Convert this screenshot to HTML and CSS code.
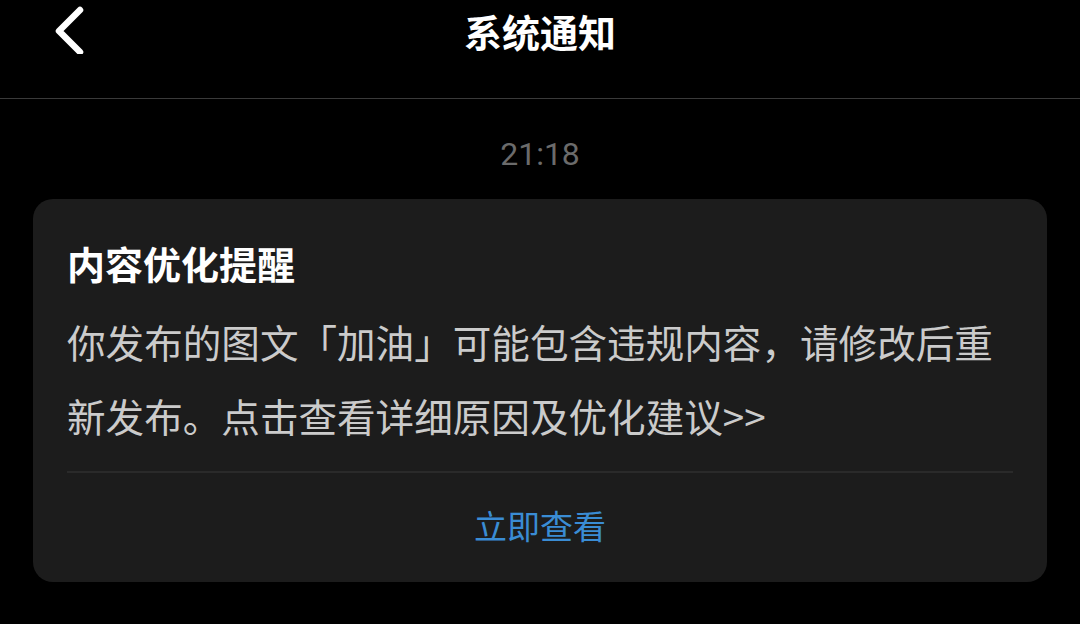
FILE: index.html
```html
<!DOCTYPE html>
<html lang="zh-CN">
<head>
    <meta charset="UTF-8">
    <meta name="viewport" content="width=device-width, initial-scale=1.0">
    <title>系统通知</title>
    <link rel="stylesheet" href="styles.css">
</head>
<body>
    <!-- Top bar -->
    <header class="top-bar">
        <a class="back-btn" href="#">
            <svg width="40" height="50" viewBox="0 0 40 50">
                <path d="M32 6 L11 27 L32 48" fill="none" stroke="#fff" stroke-width="6.5" stroke-linecap="round" stroke-linejoin="round"/>
            </svg>
        </a>
        <h1 class="page-title">系统通知</h1>
    </header>

    <!-- Messages -->
    <main class="message-list">
        <p class="msg-time">21:18</p>

        <div class="notice-card">
            <h2 class="notice-title">内容优化提醒</h2>
            <p class="notice-body">你发布的图文「加油」可能包含违规内容，请修改后重新发布。点击查看详细原因及优化建议&gt;&gt;</p>
            <div class="notice-action">
                <a href="#">立即查看</a>
            </div>
        </div>
    </main>
</body>
</html>
```

FILE: styles.css
```css
/* Basic Styling */
body {
    margin: 0;
    background-color: #000;
    color: #fff;
    font-family: "Noto Sans CJK SC", "Noto Sans", sans-serif;
}

/* Top bar */
.top-bar {
    height: 98px;
    border-bottom: 1px solid #3a3a3a;
    display: flex;
    align-items: flex-start;
    justify-content: center;
    position: relative;
}

.back-btn {
    position: absolute;
    left: 48px;
    top: 4px;
    display: block;
}

.page-title {
    margin: 8px 0 0;
    font-size: 38px;
    font-weight: bold;
    line-height: 46px;
}

/* Message list */
.message-list {
    padding: 0 33px;
}

.msg-time {
    margin: 33px 0 0;
    text-align: center;
    color: #6b6b6b;
    font-family: "Roboto", "Noto Sans", sans-serif;
    font-size: 32px;
    line-height: 44px;
}

.notice-card {
    margin-top: 23px;
    background-color: #1c1c1c;
    border-radius: 20px;
    padding: 0 34px;
}

.notice-title {
    margin: 0;
    padding-top: 37px;
    font-size: 38px;
    font-weight: bold;
    line-height: 54px;
    color: #fff;
}

.notice-body {
    margin: 14px 0 0;
    font-size: 38.6px;
    line-height: 74px;
    color: #cbcbcb;
    padding-bottom: 19px;
    border-bottom: 2px solid #2a2a2a;
}

.notice-action {
    text-align: center;
    height: 109px;
    line-height: 104px;
}

.notice-action a {
    color: #3a8cd4;
    text-decoration: none;
    font-size: 33px;
}
```
